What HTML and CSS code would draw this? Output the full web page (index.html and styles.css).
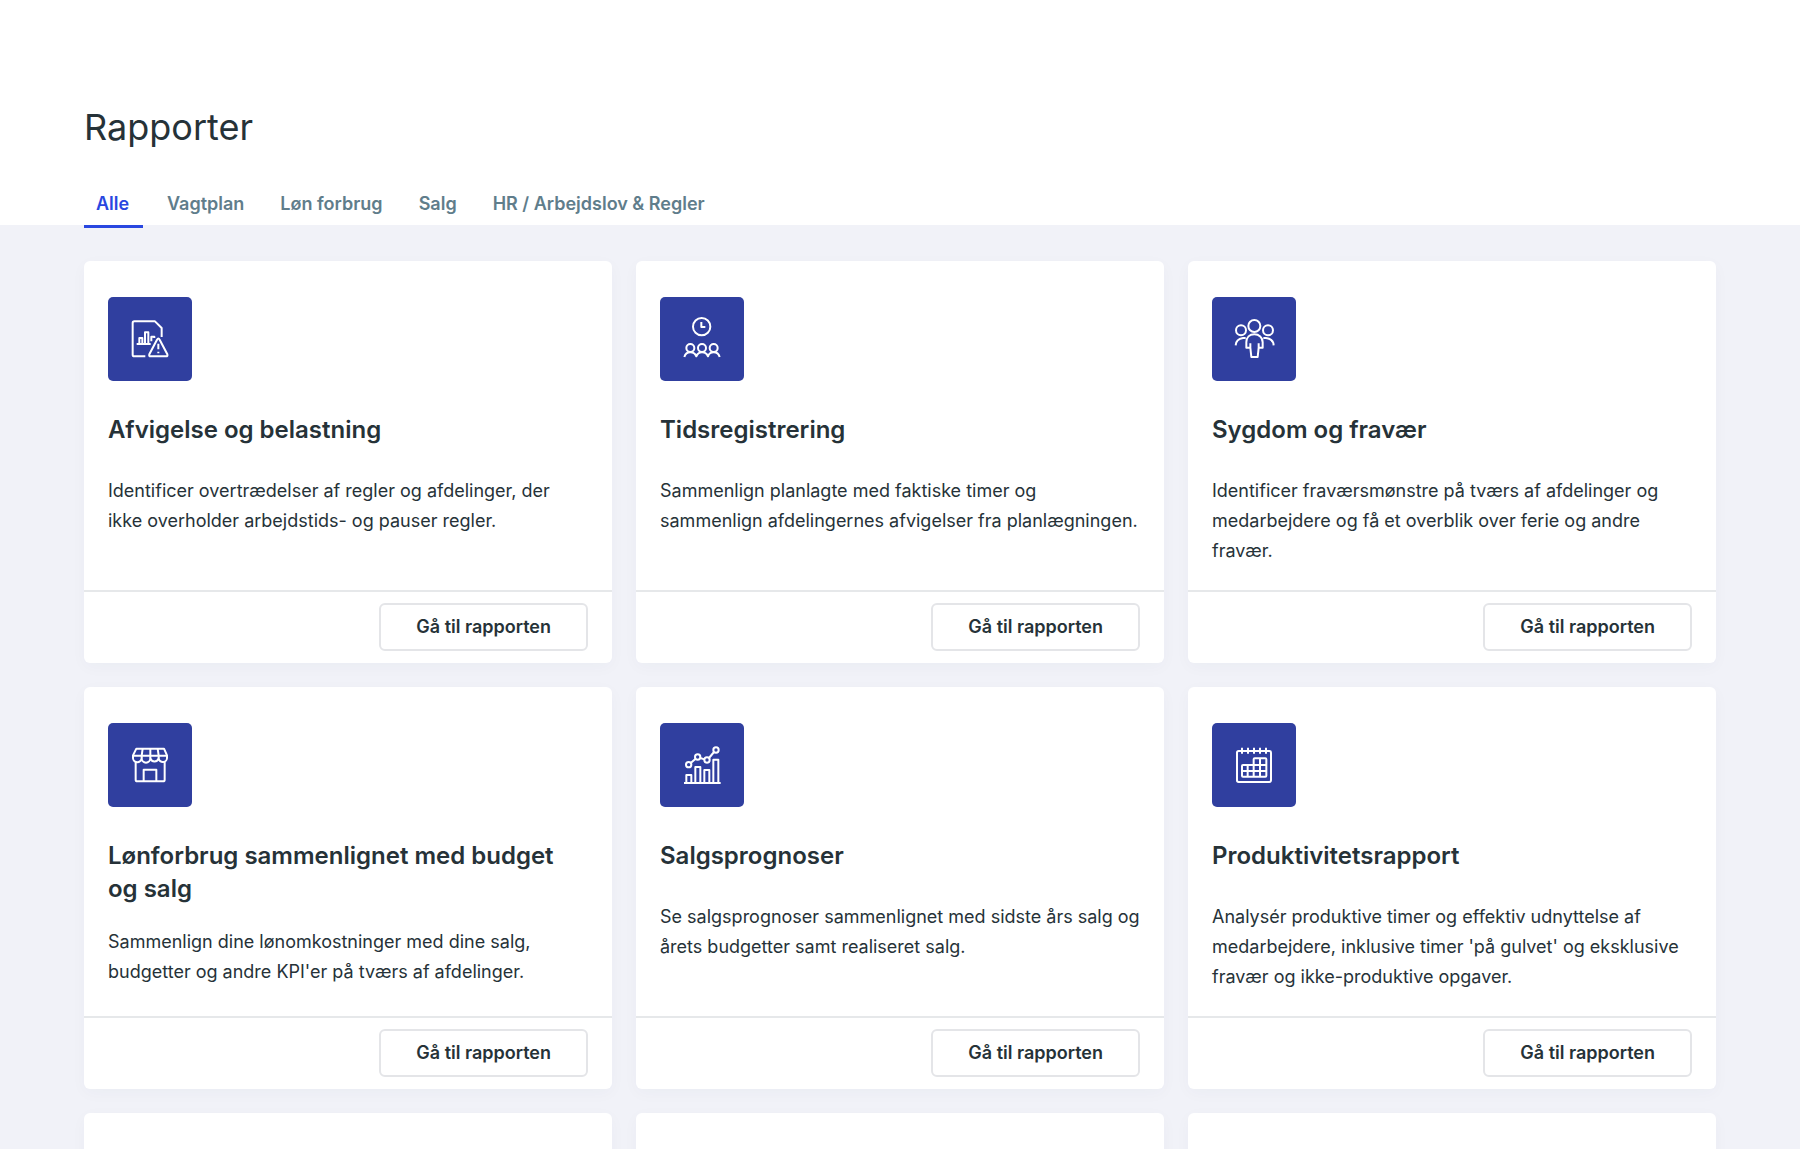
FILE: index.html
```html
<!DOCTYPE html>
<html lang="da">
<head>
<meta charset="utf-8">
<meta name="viewport" content="width=device-width, initial-scale=1">
<title>Rapporter</title>
<link rel="stylesheet" href="styles.css">
</head>
<body>
<header class="page-header">
  <h1 class="page-title">Rapporter</h1>
  <nav class="tabs" aria-label="Rapportkategorier">
    <a class="tab tab-active" href="#alle" aria-current="page">Alle</a>
    <a class="tab" href="#vagtplan">Vagtplan</a>
    <a class="tab" href="#loen">Løn forbrug</a>
    <a class="tab" href="#salg">Salg</a>
    <a class="tab" href="#hr">HR / Arbejdslov &amp; Regler</a>
  </nav>
</header>
<main class="cards">
  <article class="card">
    <div class="card-body">
      <svg class="card-icon" viewBox="0 0 252 252" aria-hidden="true">
        <path d="M112 178H79q-5 0-5-5V78q0-5 5-5h62l20 20v27"/>
        <path d="M86 141h42M94 141v-18h9v18M111 141v-35h10v35M130 133v-14h9v4"/>
        <path d="M147 128q4-7 8 0l23 44q2 6-4 6h-46q-6 0-4-6zM151 140v17M151 164v5"/>
      </svg>
      <h2 class="card-title">Afvigelse og belastning</h2>
      <p class="card-text">Identificer overtrædelser af regler og afdelinger, der ikke overholder arbejdstids- og pauser regler.</p>
    </div>
    <div class="card-footer"><button class="button" type="button">Gå til rapporten</button></div>
  </article>
  <article class="card">
    <div class="card-body">
      <svg class="card-icon" viewBox="0 0 252 252" aria-hidden="true">
        <circle cx="125" cy="89" r="26"/>
        <path d="M124 75v15h12"/>
        <circle cx="91" cy="153" r="12"/><circle cx="126" cy="153" r="12"/><circle cx="161" cy="153" r="12"/>
        <path d="M73 180q4-14 18-14 13 0 18 12 5-12 17-12 13 0 18 12 4-12 17-12 14 0 18 14"/>
      </svg>
      <h2 class="card-title">Tidsregistrering</h2>
      <p class="card-text">Sammenlign planlagte med faktiske timer og sammenlign afdelingernes afvigelser fra planlægningen.</p>
    </div>
    <div class="card-footer"><button class="button" type="button">Gå til rapporten</button></div>
  </article>
  <article class="card">
    <div class="card-body">
      <svg class="card-icon" viewBox="0 0 252 252" aria-hidden="true">
        <circle cx="127" cy="87" r="18"/><circle cx="87" cy="100" r="15"/><circle cx="168" cy="100" r="15"/>
        <path d="M71 145q1-19 22-22h8M154 123h8q22 3 23 22"/>
        <path d="M115 152h-12v-16c0-15 10-24 24-24s25 9 25 24v16h-12M115 139v13l3 28h19l3-28v-13"/>
      </svg>
      <h2 class="card-title">Sygdom og fravær</h2>
      <p class="card-text">Identificer fraværsmønstre på tværs af afdelinger og medarbejdere og få et overblik over ferie og andre fravær.</p>
    </div>
    <div class="card-footer"><button class="button" type="button">Gå til rapporten</button></div>
  </article>
  <article class="card">
    <div class="card-body">
      <svg class="card-icon" viewBox="0 0 252 252" aria-hidden="true">
        <path d="M85 77h83l9 20v6a12 12 0 0 1-25 3 13 13 0 0 1-25 0 13 13 0 0 1-26 0 12 12 0 0 1-26-3v-6z"/>
        <path d="M75 98h102M104 77l-3 21v8M127 77v29M149 77l3 21v8"/>
        <path d="M83 114v56q0 5 5 5h77q5 0 5-5v-56M107 175v-35h38v35"/>
      </svg>
      <h2 class="card-title">Lønforbrug sammenlignet med budget og salg</h2>
      <p class="card-text">Sammenlign dine lønomkostninger med dine salg, budgetter og andre KPI'er på tværs af afdelinger.</p>
    </div>
    <div class="card-footer"><button class="button" type="button">Gå til rapporten</button></div>
  </article>
  <article class="card">
    <div class="card-body">
      <svg class="card-icon" viewBox="0 0 252 252" aria-hidden="true">
        <path d="M72 180h110M79 180v-24h15v24M106 180v-48h15v48M133 180v-39h15v39M160 180v-70h15v70"/>
        <circle cx="86" cy="125" r="8"/><circle cx="113" cy="102" r="8"/><circle cx="141" cy="111" r="8"/><circle cx="168" cy="81" r="8"/>
        <path d="M92 120l15-13M121 105l12 4M147 105l15-18"/>
      </svg>
      <h2 class="card-title">Salgsprognoser</h2>
      <p class="card-text">Se salgsprognoser sammenlignet med sidste års salg og årets budgetter samt realiseret salg.</p>
    </div>
    <div class="card-footer"><button class="button" type="button">Gå til rapporten</button></div>
  </article>
  <article class="card">
    <div class="card-body">
      <svg class="card-icon" viewBox="0 0 252 252" aria-hidden="true">
        <rect x="75" y="84" width="102" height="93" rx="5"/>
        <path d="M90 74v18M108 74v18M126 74v18M144 74v18M162 74v18"/>
        <path d="M125 126v-17q0-3 3-3h32q3 0 3 3v49q0 3-3 3H93q-3 0-3-3v-29q0-3 3-3h70M90 144h73M107 126v35M125 126v35M144 106v55"/>
      </svg>
      <h2 class="card-title">Produktivitetsrapport</h2>
      <p class="card-text">Analysér produktive timer og effektiv udnyttelse af medarbejdere, inklusive timer 'på gulvet' og eksklusive fravær og ikke-produktive opgaver.</p>
    </div>
    <div class="card-footer"><button class="button" type="button">Gå til rapporten</button></div>
  </article>
  <article class="card"></article>
  <article class="card"></article>
  <article class="card"></article>
</main>
</body>
</html>
```
FILE: styles.css
```css
* {
  box-sizing: border-box;
}

html,
body {
  height: 100%;
}

body {
  display: flex;
  flex-direction: column;
  margin: 0;
  overflow: hidden;
  background: #f1f2f8;
  color: #263238;
  font-family: Inter, "Liberation Sans", sans-serif;
}

.page-header {
  flex: none;
  padding: 104px 84px 0;
  background: #fff;
}

.page-title {
  margin: 0;
  font-size: 36px;
  font-weight: 400;
  line-height: 46px;
}

.tabs {
  display: flex;
  gap: 12px;
  margin-top: 30px;
  margin-bottom: -3px;
}

.tab {
  min-width: 59px;
  padding: 12px 12px 9px;
  border-bottom: 3px solid transparent;
  color: #607d8b;
  font-size: 18px;
  font-weight: 600;
  line-height: 24px;
  text-decoration: none;
}

.tab-active {
  border-color: #2947e0;
  color: #2947e0;
}

.cards {
  display: grid;
  grid-template-columns: repeat(3, 1fr);
  grid-auto-rows: 402px;
  gap: 24px;
  padding: 36px 84px;
}

.card {
  display: flex;
  flex-direction: column;
  border-radius: 6px;
  background: #fff;
  box-shadow: 0 4px 16px rgba(38, 50, 100, 0.03);
}

.card-body {
  flex: 1;
  padding: 36px 24px 0;
}

.card-icon {
  display: block;
  width: 84px;
  height: 84px;
  border-radius: 5px;
  background: #303f9f;
  fill: none;
  stroke: #fff;
  stroke-width: 6;
  stroke-linejoin: round;
}

.card-title {
  min-height: 41px;
  margin: 32px 0 22px;
  font-size: 24px;
  font-weight: 600;
  line-height: 33px;
}

.card-text {
  margin: 0;
  font-size: 18px;
  line-height: 30px;
}

.card-footer {
  display: flex;
  justify-content: flex-end;
  padding: 11px 24px 12px;
  border-top: 2px solid #e6e8ea;
}

.button {
  height: 48px;
  padding: 0 35px;
  border: 2px solid #e4e5e8;
  border-radius: 6px;
  background: #fff;
  color: #263238;
  font: 600 18px/24px Inter, "Liberation Sans", sans-serif;
}
```
